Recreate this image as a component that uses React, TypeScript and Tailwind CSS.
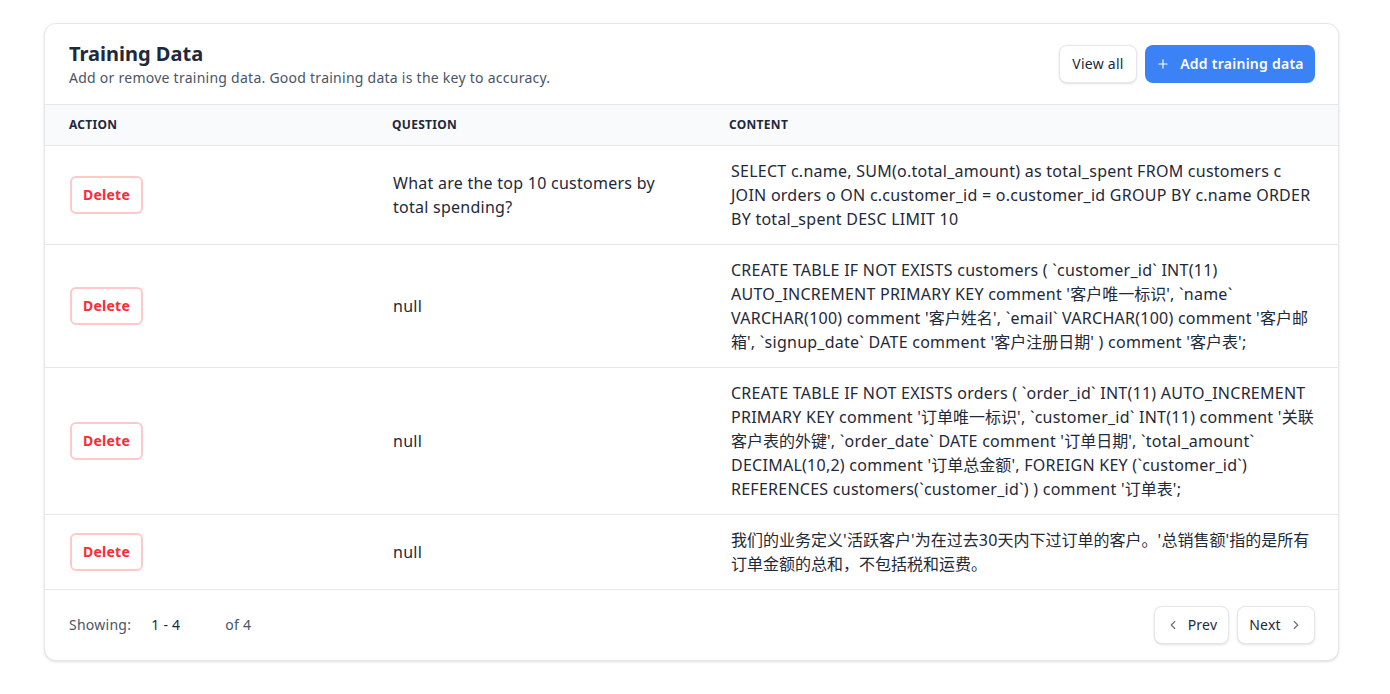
import React from 'react';
import { ChevronLeft, ChevronRight, Plus } from 'lucide-react';

type Row = { question: string | null; content: string };

const rows: Row[] = [
  {
    question: 'What are the top 10 customers by total spending?',
    content:
      'SELECT c.name, SUM(o.total_amount) as total_spent FROM customers c JOIN orders o ON c.customer_id = o.customer_id GROUP BY c.name ORDER BY total_spent DESC LIMIT 10',
  },
  {
    question: null,
    content:
      "CREATE TABLE IF NOT EXISTS customers ( `customer_id` INT(11) AUTO_INCREMENT PRIMARY KEY comment '客户唯一标识', `name` VARCHAR(100) comment '客户姓名', `email` VARCHAR(100) comment '客户邮箱', `signup_date` DATE comment '客户注册日期' ) comment '客户表';",
  },
  {
    question: null,
    content:
      "CREATE TABLE IF NOT EXISTS orders ( `order_id` INT(11) AUTO_INCREMENT PRIMARY KEY comment '订单唯一标识', `customer_id` INT(11) comment '关联客户表的外键', `order_date` DATE comment '订单日期', `total_amount` DECIMAL(10,2) comment '订单总金额', FOREIGN KEY (`customer_id`) REFERENCES customers(`customer_id`) ) comment '订单表';",
  },
  {
    question: null,
    content:
      "我们的业务定义'活跃客户'为在过去30天内下过订单的客户。'总销售额'指的是所有订单金额的总和，不包括税和运费。",
  },
];

// Latin runs get a touch of extra spacing, CJK runs keep their natural width
const MixedText: React.FC<{ text: string }> = ({ text }) => {
  const parts = text.split(/([\u3000-\u9fff\uff00-\uffef]+)/);
  return (
    <>
      {parts.map((p, i) =>
        /[\u3000-\u9fff\uff00-\uffef]/.test(p) ? (
          <span key={i} className="tracking-normal">
            {p}
          </span>
        ) : (
          <span key={i}>{p}</span>
        )
      )}
    </>
  );
};

const App: React.FC = () => {
  return (
    <div
      className="min-h-screen bg-white pt-[23px] pl-[44px] tracking-[0.016em]"
      style={{ fontFamily: '"Noto Sans", "Noto Sans CJK SC", sans-serif' }}
    >
      <div className="w-[1295px] rounded-xl border border-gray-200 bg-white shadow-sm overflow-hidden">
        {/* Header */}
        <div className="flex items-center justify-between pl-6 pr-[23px] py-4 border-b border-gray-200">
          <div>
            <h2 className="text-xl leading-7 font-bold text-gray-800 tracking-normal">Training Data</h2>
            <p className="text-sm leading-5 text-gray-600">
              Add or remove training data. Good training data is the key to accuracy.
            </p>
          </div>
          <div className="flex items-center gap-2">
            <button className="h-[38px] w-[78px] rounded-lg border border-gray-200 bg-white text-sm text-gray-800 shadow-sm">
              View all
            </button>
            <button className="h-[38px] w-[170px] rounded-lg bg-[#3b82f6] text-sm font-semibold text-white flex items-center justify-center gap-[10px]">
              <Plus size={14} strokeWidth={2} />
              Add training data
            </button>
          </div>
        </div>

        {/* Table */}
        <table className="w-full table-fixed border-collapse">
          <colgroup>
            <col className="w-[323px]" />
            <col className="w-[337px]" />
            <col />
          </colgroup>
          <thead className="bg-gray-50">
            <tr className="border-b border-gray-200">
              <th className="px-6 h-10 text-left text-xs font-bold uppercase tracking-wide text-gray-800">Action</th>
              <th className="px-6 h-10 text-left text-xs font-bold uppercase tracking-wide text-gray-800">Question</th>
              <th className="px-6 h-10 text-left text-xs font-bold uppercase tracking-wide text-gray-800">Content</th>
            </tr>
          </thead>
          <tbody>
            {rows.map((r, i) => (
              <tr key={i} className="border-b border-gray-200">
                <td className="px-6 py-[13px] align-middle">
                  <button className="h-[38px] w-[73px] ml-px rounded-md border-2 border-red-200 text-sm font-bold text-red-500 bg-white">
                    Delete
                  </button>
                </td>
                <td className="pl-[25px] pr-6 py-[13px] align-middle text-base leading-6 text-gray-800">
                  {r.question ?? 'null'}
                </td>
                <td className="pl-[26px] pr-6 py-[13px] align-middle text-base leading-6 text-gray-800 break-words">
                  <MixedText text={r.content} />
                </td>
              </tr>
            ))}
          </tbody>
        </table>

        {/* Footer */}
        <div className="flex items-center justify-between pl-6 pr-[23px] py-4">
          <div className="flex items-center text-sm text-gray-600">
            <span>Showing:</span>
            <span className="ml-5 text-gray-800">1 - 4</span>
            <span className="ml-[45px]">of 4</span>
          </div>
          <div className="flex items-center gap-2">
            <button className="h-[38px] w-[75px] rounded-lg border border-gray-200 bg-white text-sm text-gray-800 shadow-sm flex items-center justify-center gap-2">
              <ChevronLeft size={14} className="text-gray-500" />
              Prev
            </button>
            <button className="h-[38px] w-[78px] rounded-lg border border-gray-200 bg-white text-sm text-gray-800 shadow-sm flex items-center justify-center gap-2">
              Next
              <ChevronRight size={14} className="text-gray-500" />
            </button>
          </div>
        </div>
      </div>
    </div>
  );
};

export default App;
